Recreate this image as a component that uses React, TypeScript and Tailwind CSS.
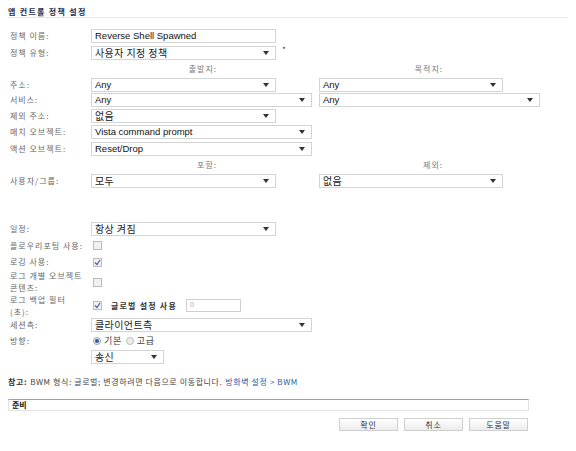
const font = { fontFamily: '"Noto Sans CJK KR", "Liberation Sans", sans-serif' };
const latin = { fontFamily: '"Liberation Sans", Arial, sans-serif' };

function Arrow() {
  return (
    <svg width="6" height="4" viewBox="0 0 6 4" className="shrink-0">
      <path d="M0 0 H6 L3 4 Z" fill="#333" />
    </svg>
  );
}

function Select({ value, w, kr }: { value: string; w: string; kr?: boolean }) {
  return (
    <div
      className={`flex h-[14px] ${w} items-center justify-between border border-[#d4d4d4] bg-white pl-[3px] pr-[6px]`}
    >
      {kr ? (
        <span className="text-[10px] leading-none tracking-[0.4px] text-[#222]">{value}</span>
      ) : (
        <span className="text-[9.5px] leading-none text-[#111]" style={latin}>
          {value}
        </span>
      )}
      <Arrow />
    </div>
  );
}

function Label({ children }: { children: React.ReactNode }) {
  return (
    <div className="w-[81px] shrink-0 text-[8px] leading-[12px] tracking-[1px] text-[#666]">{children}</div>
  );
}

function Row({ h, label, children }: { h: string; label?: React.ReactNode; children?: React.ReactNode }) {
  return (
    <div className={`flex ${h} items-center`}>
      <Label>{label}</Label>
      {children}
    </div>
  );
}

function Check({ checked }: { checked?: boolean }) {
  return (
    <div className="ml-[2px] flex h-[9px] w-[9px] items-center justify-center border border-[#bcbcbc] bg-[#f0f0f0]">
      {checked && (
        <svg width="7" height="7" viewBox="0 0 7 7">
          <path d="M1 3.5 L3 5.5 L6 1" stroke="#4a5fa0" strokeWidth="1.2" fill="none" />
        </svg>
      )}
    </div>
  );
}

function Heading({ left, right }: { left: string; right: string }) {
  return (
    <div className="flex h-[16px] items-center text-[8px] tracking-[1px] text-[#777]">
      <div className="w-[207px] text-right">{left}</div>
      <div className="w-[226px] text-right">{right}</div>
    </div>
  );
}

export default function App() {
  return (
    <div className="h-[451px] w-[576px] bg-white" style={font}>
      <div className="px-[8px]">
        <div className="flex h-[18px] items-end border-b border-[#e6e6e6] pb-[1px]">
          <span className="text-[8px] font-bold leading-none tracking-[1.3px] text-[#1d2c4c]">앱 컨트롤 정책 설정</span>
        </div>
      </div>

      <div className="pl-[10px] pt-[10px]">
        <Row h="h-[16px]" label="정책 이름:">
          <div
            className="flex h-[14px] w-[185px] items-center border border-[#d4d4d4] pl-[3px] text-[9.5px] text-[#111]"
            style={latin}
          >
            Reverse Shell Spawned
          </div>
        </Row>
        <Row h="h-[17px]" label="정책 유형:">
          <Select value="사용자 지정 정책" w="w-[185px]" kr />
          <span className="mb-[6px] ml-[6px] text-[8px] text-[#333]">*</span>
        </Row>
        <Heading left="출발지:" right="목적지:" />
        <Row h="h-[15px]" label="주소:">
          <Select value="Any" w="w-[185px]" />
          <div className="ml-[43px]">
            <Select value="Any" w="w-[184px]" />
          </div>
        </Row>
        <Row h="h-[16px]" label="서비스:">
          <Select value="Any" w="w-[221px]" />
          <div className="ml-[7px]">
            <Select value="Any" w="w-[221px]" />
          </div>
        </Row>
        <Row h="h-[16px]" label="제외 주소:">
          <Select value="없음" w="w-[185px]" kr />
        </Row>
        <Row h="h-[16px]" label="매치 오브젝트:">
          <Select value="Vista command prompt" w="w-[221px]" />
        </Row>
        <Row h="h-[17px]" label="액션 오브젝트:">
          <Select value="Reset/Drop" w="w-[221px]" />
        </Row>
        <Heading left="포함:" right="제외:" />
        <Row h="h-[15px]" label="사용자/그룹:">
          <Select value="모두" w="w-[185px]" kr />
          <div className="ml-[43px]">
            <Select value="없음" w="w-[184px]" kr />
          </div>
        </Row>

        <div className="h-[33px]" />

        <Row h="h-[16px]" label="일정:">
          <Select value="항상 켜짐" w="w-[185px]" kr />
        </Row>
        <Row h="h-[17px]" label="플로우리포팅 사용:">
          <Check />
        </Row>
        <Row h="h-[16px]" label="로깅 사용:">
          <Check checked />
        </Row>
        <Row
          h="h-[24px]"
          label={
            <>
              로그 개별 오브젝트
              <br />
              콘텐츠:
            </>
          }
        >
          <Check />
        </Row>
        <Row
          h="h-[23px]"
          label={
            <>
              로그 백업 필터
              <br />
              (초):
            </>
          }
        >
          <Check checked />
          <span className="ml-[9px] text-[8px] font-bold tracking-[1.2px] text-[#333]">글로벌 설정 사용</span>
          <div
            className="ml-[9px] flex h-[13px] w-[55px] items-center border border-[#cfcfcf] pl-[3px] text-[7px] text-[#aaa]"
            style={latin}
          >
            0
          </div>
        </Row>
        <Row h="h-[16px]" label="세션측:">
          <Select value="클라이언트측" w="w-[221px]" kr />
        </Row>
        <Row h="h-[16px]" label="방향:">
          <div className="flex items-center gap-[3px] text-[9px] tracking-[0.6px] text-[#444]">
            <span className="ml-[2px] flex h-[8px] w-[8px] items-center justify-center rounded-full border border-[#9aa4b8] bg-[#e8ecf4]">
              <span className="h-[4px] w-[4px] rounded-full bg-[#3a5a98]" />
            </span>
            <span>기본</span>
            <span className="ml-[1px] h-[8px] w-[8px] rounded-full border border-[#bbb] bg-[#eee]" />
            <span>고급</span>
          </div>
        </Row>
        <Row h="h-[16px]">
          <Select value="송신" w="w-[73px]" kr />
        </Row>

        <div className="-ml-[2px] mt-[9px] flex h-[16px] items-center text-[8px] tracking-[0.6px] text-[#444]">
          <span className="font-bold text-[#333]">참고:</span>
          <span className="ml-[3px]">BWM 형식: 글로벌; 변경하려면 다음으로 이동합니다.</span>
          <span className="ml-[3px] text-[#2d59a8]">방화벽 설정 &gt; BWM</span>
        </div>
      </div>

      <div className="px-[8px] pt-[9px]">
        <div className="flex h-[12px] w-[521px] items-center border border-[#e2e2e2] border-t-[#a0a0a0] pl-[3px] text-[8px] font-bold leading-none text-[#111]">
          준비
        </div>
        <div className="mt-[7px] flex w-[520px] justify-end gap-[6px]">
          {['확인', '취소', '도움말'].map((t) => (
            <button
              key={t}
              className="flex h-[13px] w-[59px] items-center justify-center border border-[#cfcfcf] bg-gradient-to-b from-white to-[#ececec] text-[8px] leading-none tracking-[0.8px] text-[#333]"
            >
              {t}
            </button>
          ))}
        </div>
      </div>
    </div>
  );
}
